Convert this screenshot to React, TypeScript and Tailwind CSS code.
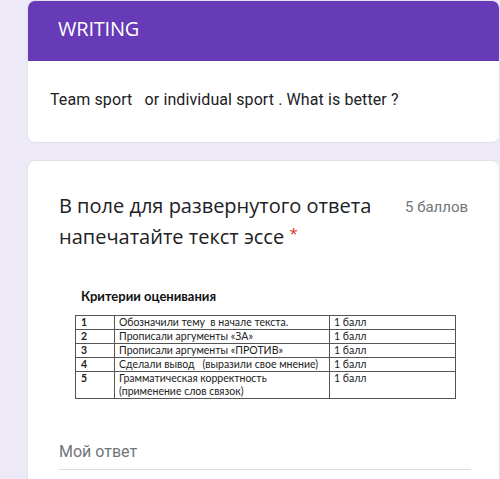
import React from "react";

const criteria: { n: string; text: string[]; score: string }[] = [
  { n: "1", text: ["Обозначили тему  в начале текста."], score: "1 балл" },
  { n: "2", text: ["Прописали аргументы «ЗА»"], score: "1 балл" },
  { n: "3", text: ["Прописали аргументы «ПРОТИВ»"], score: "1 балл" },
  { n: "4", text: ["Сделали вывод   (выразили свое мнение)"], score: "1 балл" },
  { n: "5", text: ["Грамматическая корректность", "(применение слов связок)"], score: "1 балл" },
];

export default function App() {
  return (
    <div className="w-[500px] h-[479px] overflow-hidden bg-[#ede9f6] pl-[27px]" style={{ fontFamily: "Roboto, 'Noto Sans', sans-serif" }}>
      {/* Form header card */}
      <div className="w-[473px] h-[143px] rounded-lg bg-white border border-[#e3e0ea] overflow-hidden flex flex-col">
        <div className="h-[60px] bg-[#673ab7] flex items-center pl-[30px] pb-[4px]">
          <span className="text-white text-[20px] tracking-[-0.2px]" style={{ fontFamily: "'Open Sans', 'Noto Sans', sans-serif" }}>WRITING</span>
        </div>
        <div className="flex-1 flex items-center pl-[22px] pb-[3px]">
          <span className="whitespace-pre text-[16px] text-[#202124] tracking-[0.1px]">Team sport   or individual sport . What is better ?</span>
        </div>
      </div>

      {/* Question card */}
      <div className="mt-[17px] w-[473px] h-[340px] rounded-lg bg-white border border-[#e3e0ea] pl-[31px] pt-[29px]">
        <div className="flex items-start">
          <div className="w-[340px] text-[20px] leading-[31px] text-[#202124]" style={{ fontFamily: "'Open Sans', 'Noto Sans', sans-serif" }}>
            В поле для развернутого ответа напечатайте текст эссе <span className="align-top text-[15px] leading-[24px] text-[#d93025]">*</span>
          </div>
          <div className="ml-[6px] mt-[6px] text-[15px] text-[#70757a]">5 баллов</div>
        </div>

        {/* Grading criteria */}
        <div className="mt-[36px] ml-[16px] w-[381px]" style={{ fontFamily: "Lato, 'Liberation Sans', sans-serif" }}>
          <div className="pl-[6px] text-[13px] font-bold text-[#111] leading-[16px]">Критерии оценивания</div>
          <table className="mt-[11px] w-[381px] border-collapse text-[10.5px] leading-[13px] text-[#222]">
            <tbody>
              {criteria.map((c) => (
                <tr key={c.n} className="align-top">
                  <td className="w-[39px] border border-[#555] px-[5px] py-0 font-bold">{c.n}</td>
                  <td className="w-[215px] border border-[#555] px-[4px] py-0">
                    {c.text.map((t, i) => (
                      <div key={i} className="whitespace-pre">{t}</div>
                    ))}
                  </td>
                  <td className="border border-[#555] px-[4px] py-0">{c.score}</td>
                </tr>
              ))}
            </tbody>
          </table>
        </div>

        {/* Short answer field */}
        <div className="mt-[43px] w-[412px]">
          <div className="text-[16px] text-[#70757a] leading-[20px]">Мой ответ</div>
          <div className="mt-[7px] h-px bg-[#dadce0]" />
        </div>
      </div>
    </div>
  );
}
